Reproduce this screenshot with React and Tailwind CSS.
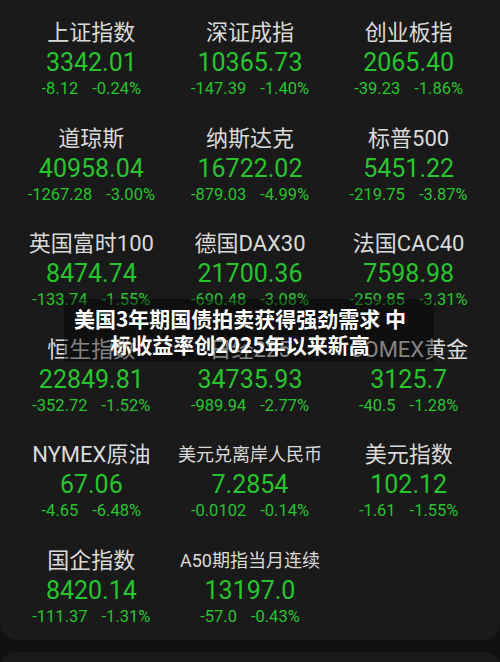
import React from "react";

const data = [
  ["上证指数", "3342.01", "-8.12", "-0.24%", 22],
  ["深证成指", "10365.73", "-147.39", "-1.40%", 22],
  ["创业板指", "2065.40", "-39.23", "-1.86%", 22],
  ["道琼斯", "40958.04", "-1267.28", "-3.00%", 22],
  ["纳斯达克", "16722.02", "-879.03", "-4.99%", 22],
  ["标普500", "5451.22", "-219.75", "-3.87%", 22],
  ["英国富时100", "8474.74", "-133.74", "-1.55%", 22],
  ["德国DAX30", "21700.36", "-690.48", "-3.08%", 22],
  ["法国CAC40", "7598.98", "-259.85", "-3.31%", 22],
  ["恒生指数", "22849.81", "-352.72", "-1.52%", 22],
  ["日经225", "34735.93", "-989.94", "-2.77%", 22],
  ["COMEX黄金", "3125.7", "-40.5", "-1.28%", 22],
  ["NYMEX原油", "67.06", "-4.65", "-6.48%", 22],
  ["美元兑离岸人民币", "7.2854", "-0.0102", "-0.14%", 18],
  ["美元指数", "102.12", "-1.61", "-1.55%", 22],
  ["国企指数", "8420.14", "-111.37", "-1.31%", 22],
  ["A50期指当月连续", "13197.0", "-57.0", "-0.43%", 18],
];

const font = { fontFamily: "Roboto, 'Noto Sans CJK SC', sans-serif" };

function Cell({ item }) {
  const [name, value, chg, pct, size] = item;
  return (
    <div className="flex h-[105.5px] flex-col items-center">
      <div
        className={
          size === 22
            ? "h-[28px] text-[22px] leading-[28px] text-[#dadada]"
            : "h-[28px] text-[18px] leading-[28px] text-[#dadada]"
        }
      >
        {name}
      </div>
      <div className="h-[31px] text-[25px] leading-[31px] text-[#27c42d]">{value}</div>
      <div className="flex h-[22px] gap-[14px] text-[16.5px] leading-[22px] text-[#27c42d]">
        <span>{chg}</span>
        <span>{pct}</span>
      </div>
    </div>
  );
}

export default function App() {
  return (
    <div className="relative h-[662px] w-[500px] overflow-hidden bg-[#111111]" style={font}>
      <div className="h-[640px] overflow-hidden rounded-b-[16px] bg-[#1a1a1a] px-[12px] pt-[19px]">
        <div className="grid grid-cols-3">
          {data.map((d, i) => (
            <Cell key={i} item={d} />
          ))}
        </div>
      </div>
      <div className="mt-[12px] h-[40px] rounded-t-[16px] bg-[#1a1a1a]" />
      <div className="absolute left-[64px] top-[299px] flex h-[63px] w-[370px] flex-col items-center justify-center bg-black/40 pr-[18px]">
        <div
          className="text-center text-[21px] font-bold leading-[26px] text-white"
          style={{ fontFamily: "'Noto Sans CJK SC', sans-serif" }}
        >
          美国3年期国债拍卖获得强劲需求 中
          <br />
          标收益率创2025年以来新高
        </div>
      </div>
    </div>
  );
}
